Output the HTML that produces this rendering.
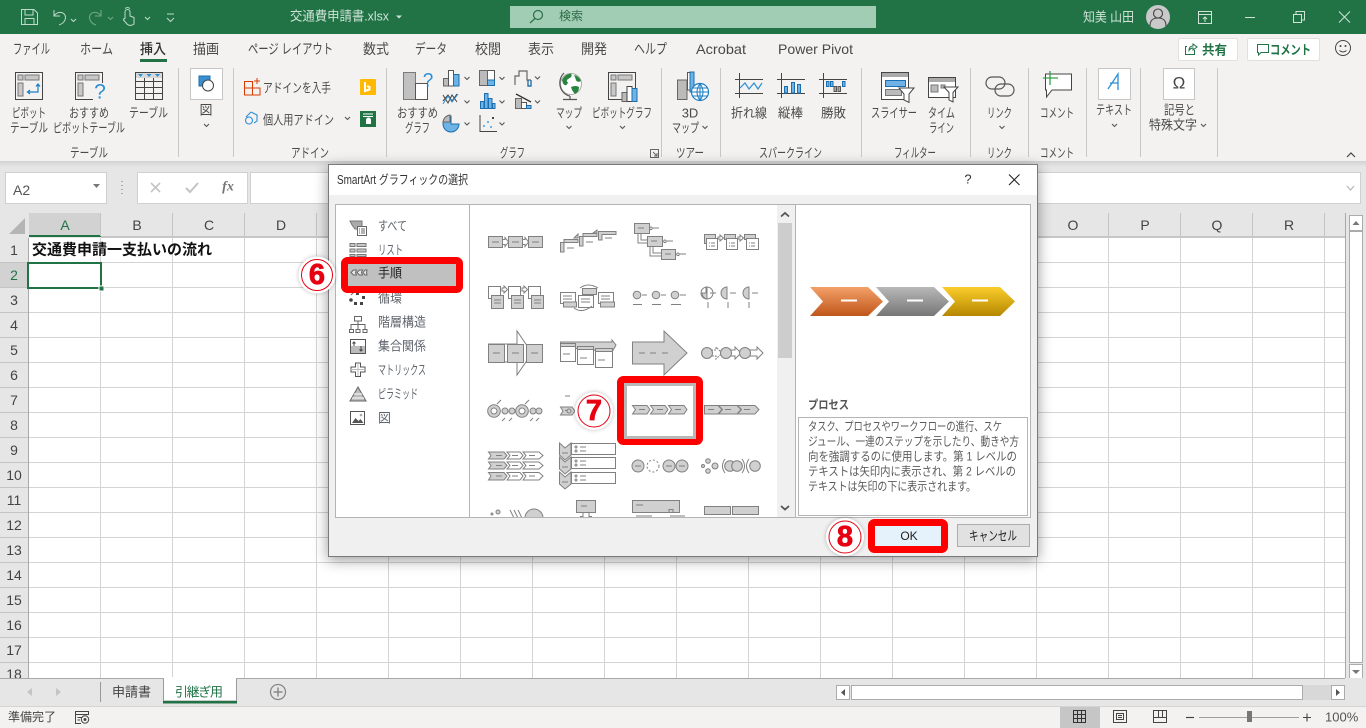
<!DOCTYPE html>
<html lang="ja"><head><meta charset="utf-8"><title>交通費申請書.xlsx</title>
<style>
html,body{margin:0;padding:0;width:1366px;height:728px;overflow:hidden;background:#fff}
svg{display:block;font-family:"Liberation Sans","Noto Sans CJK JP",sans-serif}
text{white-space:pre;dominant-baseline:central}
.r{font-size:13px;fill:#4a4a4a}
.m{text-anchor:middle}
.tab{font-size:14px;fill:#484848}
.h{font-size:14px;fill:#444;text-anchor:middle}
.tt{font-size:13px;fill:#cfe3d7}
.li{font-size:13px;fill:#5f656d}
.d{font-size:12px;fill:#5a5a5a}
.sep{stroke:#c8c8c8;stroke-width:1}
.ln{fill:none;stroke:#444;stroke-width:1}
.lg{fill:none;stroke:#666;stroke-width:1}
.ch{fill:none;stroke:#555;stroke-width:1.1}
.g path,.g rect,.g circle,.g polygon,.g line,.g polyline{stroke:#808080;stroke-width:1}
.g .f{fill:#d0d0d0}
.g .w{fill:#fff}
.g .n{fill:none}
.b{font-family:"Liberation Sans",sans-serif;font-weight:700;font-size:29px;fill:#e60012;stroke:#e60012;stroke-width:.8px;text-anchor:middle}
</style></head><body>
<svg width="1366" height="728" viewBox="0 0 1366 728" xmlns="http://www.w3.org/2000/svg">
<defs>
<pattern id="grid" x="28" y="238" width="72" height="25" patternUnits="userSpaceOnUse">
<rect width="72" height="25" fill="#fff"/>
<path d="M0.5 0V25M0 24.5H72" stroke="#d4d4d4" fill="none"/>
</pattern>
<linearGradient id="go" x1="0" y1="0" x2="0" y2="1"><stop offset="0" stop-color="#f3a068"/><stop offset="1" stop-color="#c0561a"/></linearGradient>
<linearGradient id="gg" x1="0" y1="0" x2="0" y2="1"><stop offset="0" stop-color="#b8b8b8"/><stop offset="1" stop-color="#767676"/></linearGradient>
<linearGradient id="gy" x1="0" y1="0" x2="0" y2="1"><stop offset="0" stop-color="#fbcd2c"/><stop offset="1" stop-color="#b58700"/></linearGradient>
<linearGradient id="sh" x1="0" y1="0" x2="0" y2="1"><stop offset="0" stop-color="#d2d2d2"/><stop offset="1" stop-color="#e6e6e6"/></linearGradient>
<clipPath id="galclip"><rect x="471" y="205" width="306" height="312"/></clipPath>
<clipPath id="r18"><rect x="0" y="238" width="28" height="440"/></clipPath>
</defs>

<!-- title bar -->
<rect width="1366" height="34" fill="#217346"/>
<g fill="none" stroke="#c2dacb" stroke-width="1">
<path d="M21.5 9.5H34L37.5 13V24.5H21.5ZM25 9.5V15H33V9.5M25 24.5V18.5H34V24.5"/>
<path d="M54 10V16H60M54 16C58 10 66 12 65.5 18C65 22 62 24 59 25"/>
<path d="M71 20l2.5 2.5L76 20" transform="translate(0,-1)"/>
<path d="M125 19V12a2.5 2.5 0 0 1 5 0V16l4 1.5V24q-4 3-7 0l-3.500-4q0-2 1.500-1" />
<path d="M125 8.500a4 4 0 0 1 5 0"/>
<path d="M145 19l2.500 2.500L150 19" transform="translate(0,-2)"/>
<path d="M167 14h7M167 18l3.500 3.500L174 18"/>
</g>
<g fill="none" stroke="#6fa787" stroke-width="1.100">
<path d="M101 10V16H95M101 16C97 10 89 12 89.500 18C90 22 93 24 96 25"/>
<path d="M108 17l2.500 2.500L113 17"/>
</g>
<text x="290" y="16" class="tt" textLength="99" lengthAdjust="spacingAndGlyphs">交通費申請書.xlsx</text>
<path d="M396 15.500h6l-3 3z" fill="#cfe3d7"/>
<rect x="510" y="6" width="366" height="22" fill="#a0cdb3"/>
<circle cx="538" cy="15" r="4.500" fill="none" stroke="#2b7048" stroke-width="1.200"/>
<path d="M535 18.500L530 23" stroke="#2b7048" stroke-width="1.200"/>
<text x="559" y="16" font-size="12" fill="#2f6b48">検索</text>
<text x="1083" y="17" class="tt" textLength="51" lengthAdjust="spacingAndGlyphs">知美 山田</text>
<circle cx="1158" cy="17" r="12" fill="#c9c9c9"/>
<g fill="none" stroke="#444" stroke-width="1.100"><circle cx="1158" cy="13.500" r="4.500"/><path d="M1150 26c0-6 3-8 8-8s8 2 8 8"/></g>
<g fill="none" stroke="#cfe3d7" stroke-width="1">
<path d="M1198.500 11.500H1211.500V23.500H1198.500ZM1198.500 14.500H1211.500M1205 22V17M1203 19l2-2 2 2"/>
<path d="M1245 17.500H1255"/>
<path d="M1293.500 14.500H1301.500V22.500H1293.500ZM1296 14.500V11.500H1304.500V20H1301.500"/>
<path d="M1339 11.500L1350 22.500M1350 11.500L1339 22.500"/>
</g>

<!-- ribbon -->
<rect y="34" width="1366" height="127" fill="#f3f2f1"/>
<text x="13" y="49" class="tab" textLength="37" lengthAdjust="spacingAndGlyphs">ファイル</text>
<text x="80" y="49" class="tab" textLength="33" lengthAdjust="spacingAndGlyphs">ホーム</text>
<text x="140" y="49" class="tab" style="font-weight:500;fill:#333" textLength="26" lengthAdjust="spacingAndGlyphs">挿入</text>
<rect x="140" y="59" width="27" height="3" fill="#217346"/>
<text x="193" y="49" class="tab" textLength="26" lengthAdjust="spacingAndGlyphs">描画</text>
<text x="248" y="49" class="tab" textLength="85" lengthAdjust="spacingAndGlyphs">ページ レイアウト</text>
<text x="363" y="49" class="tab" textLength="26" lengthAdjust="spacingAndGlyphs">数式</text>
<text x="415" y="49" class="tab" textLength="32" lengthAdjust="spacingAndGlyphs">データ</text>
<text x="475" y="49" class="tab" textLength="26" lengthAdjust="spacingAndGlyphs">校閲</text>
<text x="528" y="49" class="tab" textLength="26" lengthAdjust="spacingAndGlyphs">表示</text>
<text x="581" y="49" class="tab" textLength="26" lengthAdjust="spacingAndGlyphs">開発</text>
<text x="634" y="49" class="tab" textLength="33" lengthAdjust="spacingAndGlyphs">ヘルプ</text>
<text x="696" y="49" class="tab" textLength="50" lengthAdjust="spacingAndGlyphs">Acrobat</text>
<text x="778" y="49" class="tab" textLength="75" lengthAdjust="spacingAndGlyphs">Power Pivot</text>

<rect x="1178.500" y="38.500" width="59" height="22" rx="1.500" fill="#fff" stroke="#e0e0e0"/>
<path d="M1187 46.500H1185.500V54.500H1194.500V50M1189 50.500C1189 47 1191 46 1193 46V44L1197 47L1193 50V48C1191.500 48 1190 49 1189 50.500Z" fill="none" stroke="#217346"/>
<text x="1202" y="50" font-size="13" font-weight="700" fill="#217346" textLength="25" lengthAdjust="spacingAndGlyphs">共有</text>
<rect x="1247.500" y="38.500" width="72" height="22" rx="1.500" fill="#fff" stroke="#e0e0e0"/>
<path d="M1257.500 44.500H1268.500V52.500H1261L1258.500 55V52.500H1257.500Z" fill="none" stroke="#217346"/>
<text x="1270" y="50" font-size="13" font-weight="700" fill="#217346" textLength="41" lengthAdjust="spacingAndGlyphs">コメント</text>
<g fill="none" stroke="#444"><circle cx="1343" cy="48" r="7.500"/><path d="M1339.500 50.500q3.500 3 7 0"/></g>
<circle cx="1340.500" cy="46" r="1" fill="#444"/><circle cx="1345.500" cy="46" r="1" fill="#444"/>

<!-- separators -->
<g class="sep">
<path d="M178.500 68V157M233.500 68V157M386.500 68V157M661.500 68V157M720.500 68V157M861.500 68V157M970.500 68V157M1028.500 68V157M1086.500 68V157M1140.500 68V157M1217.500 68V157"/>
</g>

<!-- table group -->
<g class="ln">
<rect x="15.500" y="72.500" width="27" height="27"/>
<rect x="75.500" y="72.500" width="27" height="27"/>
<rect x="135.500" y="72.500" width="27" height="27"/>
<path d="M135.500 81.500H162.500M135.500 87.500H162.500M135.500 93.500H162.500M144.500 78V99.500M153.500 78V99.500"/>
</g>
<rect x="18" y="75" width="5" height="5" fill="#c8c8c8" stroke="#777"/><rect x="25" y="75" width="14" height="5" fill="#c8c8c8" stroke="#777"/><rect x="18" y="83" width="5" height="13" fill="#c8c8c8" stroke="#777"/>
<path d="M38 84V92H28M30 90l-2.500 2 2.500 2M36 86.500l2-2.500 2 2.500" fill="none" stroke="#1b7ec2" stroke-width="1.200"/>
<rect x="78" y="75" width="5" height="5" fill="#c8c8c8" stroke="#777"/><rect x="85" y="75" width="14" height="5" fill="#c8c8c8" stroke="#777"/><rect x="78" y="83" width="5" height="13" fill="#c8c8c8" stroke="#777"/>
<rect x="93" y="83" width="13" height="20" fill="#f3f2f1"/>
<text x="100" y="92" font-size="21" fill="#2e8fd3" text-anchor="middle">?</text>
<rect x="136" y="73" width="26" height="5" fill="#d8d8d8"/>
<path d="M138 74h5l-2.500 3zM146.500 74h5l-2.500 3zM155 74h5l-2.500 3z" fill="#2e8fd3"/>
<text x="12" y="113" class="r" textLength="34" lengthAdjust="spacingAndGlyphs">ピボット</text>
<text x="10" y="128" class="r" textLength="38" lengthAdjust="spacingAndGlyphs">テーブル</text>
<text x="69" y="113" class="r" textLength="40" lengthAdjust="spacingAndGlyphs">おすすめ</text>
<text x="53" y="128" class="r" textLength="72" lengthAdjust="spacingAndGlyphs">ピボットテーブル</text>
<text x="129" y="113" class="r" textLength="39" lengthAdjust="spacingAndGlyphs">テーブル</text>
<text x="70" y="153" class="r" textLength="38" lengthAdjust="spacingAndGlyphs">テーブル</text>

<!-- illustrations -->
<rect x="190.500" y="68.500" width="32" height="31" fill="#fff" stroke="#c6c6c6"/>
<path d="M199 76H210V86H199Z" fill="#3a8fd0" stroke="#1b6fae"/>
<circle cx="208" cy="85.500" r="5.500" fill="#fff" stroke="#444"/>
<text x="206" y="110" class="r m">図</text>
<path class="ch" d="M204 124l2.500 2.500L209 124"/>

<!-- add-ins -->
<path d="M244.500 81.500H252.500V95H244.500ZM244.500 88H260V95H252.500M252.500 88V81.500" fill="none" stroke="#d83b01"/>
<path d="M257 78v6M254 81h6" stroke="#d83b01"/>
<text x="263" y="88" class="r" textLength="68" lengthAdjust="spacingAndGlyphs">アドインを入手</text>
<rect x="360" y="79" width="16" height="16" rx="1" fill="#ffb900"/>
<path d="M365 82V91l4.500-1.500V87L367 86" fill="none" stroke="#fff" stroke-width="2"/>
<path d="M251 112l6 3v6l-3 2M249 124a3.500 3.500 0 1 1 0-7 3.500 3.500 0 1 1 0 7M251 112l-5 5" fill="none" stroke="#2e8fd3" stroke-width="1.100"/>
<text x="263" y="120" class="r" textLength="71" lengthAdjust="spacingAndGlyphs">個人用アドイン</text>
<path class="ch" d="M345 117l2.500 2.500L350 117"/>
<rect x="360" y="111" width="16" height="16" fill="#217346"/>
<path d="M363 114h10M363 116.500h10" stroke="#fff"/><path d="M366 120a2.500 2.500 0 0 1 5 0v4h-5z" fill="#fff"/>
<text x="291" y="153" class="r" textLength="38" lengthAdjust="spacingAndGlyphs">アドイン</text>

<!-- charts -->
<rect x="403.500" y="72.500" width="12" height="27" fill="#c1c1c1" stroke="#7a7a7a"/>
<rect x="415.500" y="83.500" width="12" height="16" fill="#fff" stroke="#555"/>
<text x="428" y="81" font-size="19" fill="#2e8fd3" text-anchor="middle">?</text>
<text x="397" y="113" class="r" textLength="41" lengthAdjust="spacingAndGlyphs">おすすめ</text>
<text x="405" y="128" class="r" textLength="25" lengthAdjust="spacingAndGlyphs">グラフ</text>
<!-- col 1 -->
<rect x="443.500" y="78.500" width="5" height="7.500" fill="#bbb" stroke="#666"/><rect x="448.500" y="70.500" width="5" height="15.500" fill="#fff" stroke="#555"/><rect x="453.500" y="74.500" width="5.500" height="11.500" fill="#6fb3e6" stroke="#1b6fae"/>
<path d="M443 101l5-6 4 6 5-7M443 95l5 8 4-8 5 7" fill="none" stroke="#444"/><path d="M443 104l5-8 4 6 6-8" fill="none" stroke="#2e8fd3"/>
<path d="M451 116a8 8 0 1 0 8 8h-8z" fill="#6fb3e6" stroke="#1b6fae"/><path d="M443 122a8 8 0 0 1 7-7v7z" fill="#bbb" stroke="#666"/>
<!-- col 2 -->
<rect x="479.500" y="70.500" width="15" height="15" fill="#fff" stroke="#555"/><rect x="479.500" y="70.500" width="8" height="15" fill="#bbb" stroke="#666"/><rect x="487.500" y="80" width="7" height="5.500" fill="#6fb3e6" stroke="#1b6fae"/>
<g fill="#6fb3e6" stroke="#1b6fae"><rect x="480.500" y="101.500" width="3.500" height="7"/><rect x="484.500" y="93.500" width="3.500" height="15"/><rect x="488.500" y="98.500" width="3.500" height="10"/><rect x="492.500" y="103.500" width="2.500" height="5"/></g>
<path d="M480 115V131.500H497" fill="none" stroke="#444"/>
<g fill="#6fb3e6"><rect x="483" y="125" width="2" height="2"/><rect x="487" y="121" width="2" height="2"/><rect x="490" y="126" width="2" height="2"/></g><rect x="492" y="117" width="2" height="2" fill="#444"/>
<!-- col 3 -->
<path d="M515 85V76H519V71H527V80H531M528 80V86H531V80" fill="none" stroke="#666" stroke-width="1.200"/><path d="M528 80V86H531V80" fill="none" stroke="#1b6fae" stroke-width="1.200"/>
<rect x="515.500" y="98.500" width="6" height="10" fill="#bbb" stroke="#666"/><rect x="521.500" y="102.500" width="5" height="6" fill="#fff" stroke="#555"/><rect x="526.500" y="105.500" width="4.500" height="3" fill="#6fb3e6" stroke="#1b6fae"/><path d="M516 94l15 8" stroke="#333" stroke-width="1.300"/>
<g class="ch"><path d="M464.500 77l2.500 2.500 2.500-2.500M464.500 100.500l2.500 2.500 2.500-2.500M464.500 122.500l2.500 2.500 2.500-2.500M499.500 77l2.500 2.500 2.500-2.500M499.500 100.500l2.500 2.500 2.500-2.500M499.500 122.500l2.500 2.500 2.500-2.500M535 76.500l2.500 2.500 2.500-2.500M535 100.500l2.500 2.500 2.500-2.500"/></g>
<!-- map -->
<circle cx="571" cy="84" r="10.500" fill="#fff" stroke="#aaa"/>
<path d="M562 80q3-6 9-6.500 2 3-2 5t-1 4q-2 5-5 1zM574 75q5 1 7 6-4 2-5-1t-2-5zM571 87q5-2 8 0 0 5-4 7-3-3-4-7z" fill="#29843f"/>
<path d="M564 73a14 14 0 0 0 0 20q4 3 6 3M570 96v3M563 99.500h14" fill="none" stroke="#555" stroke-width="1.200"/>
<text x="556" y="113" class="r" textLength="26" lengthAdjust="spacingAndGlyphs">マップ</text>
<path class="ch" d="M566.500 126l2.500 2.500 2.500-2.500"/>
<!-- pivot chart -->
<rect x="608.500" y="72.500" width="27" height="27" fill="none" stroke="#444"/>
<rect x="611" y="75" width="5" height="5" fill="#c8c8c8" stroke="#777"/><rect x="618" y="75" width="14" height="5" fill="#c8c8c8" stroke="#777"/><rect x="611" y="83" width="5" height="13" fill="#c8c8c8" stroke="#777"/>
<rect x="622" y="92.500" width="5" height="9" fill="#bbb" stroke="#666"/><rect x="627" y="86.500" width="5" height="15" fill="#fff" stroke="#444"/><rect x="632" y="88.500" width="5" height="13" fill="#6fb3e6" stroke="#1b6fae"/>
<text x="592" y="113" class="r" textLength="60" lengthAdjust="spacingAndGlyphs">ピボットグラフ</text>
<path class="ch" d="M620 126l2.500 2.500 2.500-2.500"/>
<text x="500" y="153" class="r" textLength="25" lengthAdjust="spacingAndGlyphs">グラフ</text>
<path d="M650.500 149.500H658.500V157.500H650.500ZM653 152l4 4M657 153v3h-3" fill="none" stroke="#666"/>

<!-- 3D map -->
<path d="M677.500 85V99.500H687V80H677.500Z" fill="#bbb" stroke="#666"/>
<path d="M687.500 72.500H694V90H687.500Z" fill="#fff" stroke="#555"/>
<path d="M694 72h-4v20h4z" fill="#6fb3e6" stroke="#1b6fae"/>
<circle cx="700" cy="92" r="8.500" fill="#fff" stroke="#1b7ec2" stroke-width="1.200"/>
<path d="M691.500 92H708.500M693 88H707M693 96H707M700 83.500V100.500M700 83.500Q694 92 700 100.500M700 83.500Q706 92 700 100.500" fill="none" stroke="#1b7ec2"/>
<text x="690" y="113" class="r m">3D</text>
<text x="672" y="128" class="r" textLength="27" lengthAdjust="spacingAndGlyphs">マップ</text>
<path class="ch" d="M702.500 126l2.500 2.500 2.500-2.500"/>
<text x="676" y="153" class="r" textLength="28" lengthAdjust="spacingAndGlyphs">ツアー</text>

<!-- sparklines -->
<g class="ln">
<path d="M735 79.500H763M735 93.500H763M739.500 73V98"/>
<path d="M777 79.500H805M777 93.500H805M781.500 73V98"/>
<path d="M819 79.500H847M819 93.500H847M823.500 73V98"/>
</g>
<path d="M740 88l5-5 4 6 5-6 4 6 4-6" fill="none" stroke="#2e8fd3" stroke-width="1.200"/>
<g fill="#6fb3e6" stroke="#1b6fae"><rect x="784.500" y="86.500" width="3" height="6.500"/><rect x="791.500" y="82.500" width="3" height="10.500"/><rect x="797.500" y="84.500" width="3" height="8.500"/></g>
<g fill="#6fb3e6" stroke="#1b6fae"><rect x="826.500" y="81.500" width="2.500" height="5"/><rect x="830.500" y="81.500" width="2.500" height="5"/><rect x="842.500" y="81.500" width="2.500" height="5"/></g>
<g fill="#aaa" stroke="#555"><rect x="834" y="86.500" width="2.500" height="5"/><rect x="838" y="86.500" width="2.500" height="5"/></g>
<text x="731" y="113" class="r" textLength="36" lengthAdjust="spacingAndGlyphs">折れ線</text>
<text x="778" y="113" class="r" textLength="25" lengthAdjust="spacingAndGlyphs">縦棒</text>
<text x="821" y="113" class="r" textLength="25" lengthAdjust="spacingAndGlyphs">勝敗</text>
<text x="759" y="153" class="r" textLength="63" lengthAdjust="spacingAndGlyphs">スパークライン</text>

<!-- filter -->
<rect x="881.500" y="72.500" width="27" height="27" fill="#fff" stroke="#444"/><rect x="882" y="73" width="26" height="4" fill="#aaa"/>
<rect x="885.500" y="80.500" width="20" height="6" fill="#6fb3e6" stroke="#1b6fae"/><rect x="885.500" y="89.500" width="16" height="6" fill="#bbb" stroke="#777"/>
<path d="M899 88H914L909 94V102.500L904 100V94Z" fill="#fff" stroke="#444"/>
<rect x="928.500" y="77.500" width="27" height="20" fill="#fff" stroke="#444"/><rect x="929" y="78" width="26" height="4" fill="#aaa"/>
<rect x="931" y="85" width="7" height="7" fill="#bbb" stroke="#777"/><rect x="941" y="85" width="4" height="3" fill="#bbb" stroke="#777"/>
<path d="M944 87H958L953 92.500V102L949 100V92.500Z" fill="#fff" stroke="#444"/>
<text x="871" y="113" class="r" textLength="46" lengthAdjust="spacingAndGlyphs">スライサー</text>
<text x="928" y="113" class="r" textLength="27" lengthAdjust="spacingAndGlyphs">タイム</text>
<text x="929" y="128" class="r" textLength="25" lengthAdjust="spacingAndGlyphs">ライン</text>
<text x="894" y="153" class="r" textLength="42" lengthAdjust="spacingAndGlyphs">フィルター</text>

<!-- link -->
<g fill="none" stroke="#555" stroke-width="1.200">
<rect x="986" y="77" width="19" height="12" rx="6"/><rect x="995" y="84" width="19" height="12" rx="6"/>
</g>
<text x="987" y="113" class="r" textLength="25" lengthAdjust="spacingAndGlyphs">リンク</text>
<path class="ch" d="M999.500 126l2.500 2.500 2.500-2.500"/>
<text x="987" y="153" class="r" textLength="25" lengthAdjust="spacingAndGlyphs">リンク</text>

<!-- comment -->
<path d="M1045.500 74H1071.500V90H1052L1046.500 97V90H1045.500Z" fill="#fff" stroke="#444"/>
<path d="M1050 71V85M1043 78H1058" stroke="#33a04a" stroke-width="1.300"/>
<text x="1040" y="113" class="r" textLength="34" lengthAdjust="spacingAndGlyphs">コメント</text>
<text x="1040" y="153" class="r" textLength="34" lengthAdjust="spacingAndGlyphs">コメント</text>

<!-- text -->
<rect x="1098.500" y="68.500" width="32" height="31" fill="#fff" stroke="#c6c6c6"/>
<path d="M1108 89l10-15v16M1110 83h8" fill="none" stroke="#2e8fd3" stroke-width="1.300"/>
<text x="1096" y="110" class="r" textLength="36" lengthAdjust="spacingAndGlyphs">テキスト</text>
<path class="ch" d="M1112 124l2.500 2.500 2.500-2.500"/>
<rect x="1163.500" y="68.500" width="31" height="31" fill="#fff" stroke="#c6c6c6"/>
<text x="1179" y="83" font-size="17" fill="#444" text-anchor="middle">Ω</text>
<text x="1164" y="110" class="r" textLength="31" lengthAdjust="spacingAndGlyphs">記号と</text>
<text x="1149" y="125" class="r" textLength="48" lengthAdjust="spacingAndGlyphs">特殊文字</text>
<path class="ch" d="M1201 124l2.500 2.500 2.500-2.500"/>
<path d="M1347 157l4-4 4 4" fill="none" stroke="#444" stroke-width="1.200"/>

<!-- formula bar -->
<rect y="161" width="1366" height="517" fill="#e6e6e6"/>
<rect y="161" width="1366" height="6" fill="url(#sh)"/>
<rect x="5.500" y="172.500" width="101" height="31" fill="#fff" stroke="#d0d0d0"/>
<text x="13" y="190" font-size="14" fill="#555">A2</text>
<path d="M93 184h7l-3.500 4z" fill="#777"/>
<path d="M122 181v1M122 185v1M122 189v1M122 193v1" stroke="#999" stroke-width="1.500"/>
<rect x="137.500" y="172.500" width="110" height="31" fill="#fff" stroke="#d0d0d0"/>
<path d="M151 183l9 9M160 183l-9 9" stroke="#c4c4c4" stroke-width="1.600"/>
<path d="M186 188l4 4 8-9" fill="none" stroke="#c4c4c4" stroke-width="2"/>
<text x="228" y="187" font-family="Liberation Serif" font-style="italic" font-weight="700" font-size="14" fill="#777" text-anchor="middle">fx</text>
<rect x="250.500" y="172.500" width="1110" height="31" fill="#fff" stroke="#d0d0d0"/>
<path d="M1347 186l3.500 4 3.500-4" fill="none" stroke="#bbb" stroke-width="1.300"/>

<!-- column header -->
<path d="M25 218V234H9Z" fill="#b5b5b5"/>
<rect x="29" y="213" width="72" height="22" fill="#d2d2d2"/>
<rect x="29" y="235" width="72" height="2" fill="#217346"/>
<path d="M100.500 213V236M172.500 213V236M244.500 213V236M316.500 213V236M1036.500 213V236M1108.500 213V236M1180.500 213V236M1252.500 213V236M1324.500 213V236" stroke="#c4c4c4"/>
<rect x="101" y="236.500" width="1244" height="1" fill="#a8a8a8"/>
<text x="65" y="225" class="h" style="fill:#217346">A</text>
<text x="137" y="225" class="h">B</text><text x="209" y="225" class="h">C</text><text x="281" y="225" class="h">D</text>
<text x="1073" y="225" class="h">O</text><text x="1145" y="225" class="h">P</text><text x="1217" y="225" class="h">Q</text><text x="1289" y="225" class="h">R</text>

<!-- grid -->
<rect x="29" y="238" width="1316" height="440" fill="url(#grid)"/>
<rect x="1345" y="213" width="1" height="465" fill="#a8a8a8"/>
<rect x="28" y="238" width="1" height="440" fill="#a8a8a8"/>
<!-- row header -->
<rect x="0" y="263" width="28" height="25" fill="#d2d2d2"/>
<g clip-path="url(#r18)">
<path d="M0 262.500H28M0 287.500H28M0 312.500H28M0 337.500H28M0 362.500H28M0 387.500H28M0 412.500H28M0 437.500H28M0 462.500H28M0 487.500H28M0 512.500H28M0 537.500H28M0 562.500H28M0 587.500H28M0 612.500H28M0 637.500H28M0 662.500H28" stroke="#c4c4c4"/>
<g font-size="14" fill="#444" text-anchor="middle">
<text x="14" y="250">1</text><text x="14" y="275" fill="#217346">2</text><text x="14" y="300">3</text><text x="14" y="325">4</text><text x="14" y="350">5</text><text x="14" y="375">6</text><text x="14" y="400">7</text><text x="14" y="425">8</text><text x="14" y="450">9</text><text x="14" y="475">10</text><text x="14" y="500">11</text><text x="14" y="525">12</text><text x="14" y="550">13</text><text x="14" y="575">14</text><text x="14" y="600">15</text><text x="14" y="625">16</text><text x="14" y="650">17</text><text x="14" y="674">18</text>
</g></g>
<text x="32" y="250" font-size="15" font-weight="700" fill="#111" textLength="180" lengthAdjust="spacingAndGlyphs">交通費申請一支払いの流れ</text>
<rect x="28" y="263" width="73" height="25" fill="none" stroke="#217346" stroke-width="2"/>
<rect x="99" y="286" width="5" height="5" fill="#217346" stroke="#fff"/>

<!-- vertical scrollbar -->
<rect x="1346" y="213" width="20" height="465" fill="#e6e6e6"/>
<rect x="1349.500" y="215.500" width="13" height="15" fill="#fff" stroke="#ababab"/><path d="M1352.500 225l3.500-4 3.500 4z" fill="#777"/>
<rect x="1349.500" y="231.500" width="13" height="431" fill="#fff" stroke="#ababab"/>
<rect x="1349.500" y="664.500" width="13" height="14" fill="#fff" stroke="#ababab"/><path d="M1352 670h8l-4 4z" fill="#777"/>

<!-- sheet tabs -->
<rect y="678" width="1366" height="28" fill="#e6e6e6"/>
<rect x="0" y="678" width="1345" height="1" fill="#a8a8a8"/>
<path d="M32 688v8l-5-4zM56 688v8l5-4z" fill="#c4c4c4"/>
<rect x="100" y="682" width="1" height="20" fill="#999"/>
<text x="112" y="692" font-size="13" fill="#444" textLength="39">申請書</text>
<path d="M163.500 679V701H236.500V679" fill="#fff" stroke="#999"/><rect x="164" y="677" width="72" height="3" fill="#fff"/>
<rect x="163" y="701" width="74" height="2.500" fill="#217346"/>
<text x="175" y="692" font-size="13" fill="#217346" textLength="48">引継ぎ用</text>
<circle cx="278" cy="692" r="7.500" fill="none" stroke="#888" stroke-width="1.300"/><path d="M278 687.500v9M273.500 692h9" stroke="#888" stroke-width="1.500"/>
<!-- hscroll -->
<rect x="836.500" y="685.500" width="13" height="14" fill="#fff" stroke="#ababab"/><path d="M845 689v7l-4-3.500z" fill="#555"/>
<rect x="851.500" y="685.500" width="451" height="14" fill="#fff" stroke="#ababab"/>
<rect x="1303" y="685" width="28" height="15" fill="#d8d8d8"/>
<rect x="1331.500" y="685.500" width="13" height="14" fill="#fff" stroke="#ababab"/><path d="M1336 689v7l4-3.500z" fill="#555"/>

<!-- status bar -->
<rect y="706" width="1366" height="22" fill="#f3f2f1"/>
<rect y="706" width="1366" height="1" fill="#d4d4d4"/>
<text x="8" y="717" font-size="12" fill="#444" textLength="48">準備完了</text>
<path d="M75.500 711.500H88.500V714.500H75.500ZM75.500 714.500V723.500H81M77.500 717.500H82M77.500 720H80" fill="none" stroke="#444"/><circle cx="85" cy="719.500" r="3.700" fill="none" stroke="#444"/><circle cx="85" cy="719.500" r="1.500" fill="#444"/>
<rect x="1060" y="707" width="40" height="21" fill="#c6c6c6"/>
<path d="M1073.500 710.500H1085.500V722.500H1073.500ZM1077.500 710.500V722.500M1081.500 710.500V722.500M1073.500 714.500H1085.500M1073.500 718.500H1085.500" fill="none" stroke="#333"/>
<path d="M1113.500 710.500H1126.500V722.500H1113.500ZM1116.500 713.500H1123.500V719.500H1116.500ZM1118 715.500H1122M1118 717.500H1122" fill="none" stroke="#444"/>
<path d="M1153.500 710.500H1166.500V722.500H1153.500ZM1153.500 717.500H1166.500M1158.500 710.500V717.500M1162.500 710.500V717.500" fill="none" stroke="#444"/>
<path d="M1186 717.500H1194" stroke="#444" stroke-width="1.200"/>
<rect x="1199" y="717" width="100" height="1" fill="#a0a0a0"/>
<rect x="1247" y="711" width="5" height="11" fill="#777"/>
<path d="M1303 717.500H1311M1307 713.500V721.500" stroke="#444" stroke-width="1.100"/>
<text x="1325" y="717" font-size="13" fill="#555">100%</text>

<!-- dialog -->
<rect x="328.500" y="164.500" width="709" height="392" fill="#f0f0f0" stroke="#7a7a7a" style="filter:drop-shadow(0 3px 7px rgba(0,0,0,.4))"/>
<rect x="329" y="165" width="708" height="30" fill="#fff"/>
<text x="337" y="180" font-size="12.500" fill="#333" textLength="131" lengthAdjust="spacingAndGlyphs">SmartArt グラフィックの選択</text>
<text x="968" y="179" font-size="13" fill="#333" text-anchor="middle">?</text>
<path d="M1009 174.500L1019.500 185M1019.500 174.500L1009 185" stroke="#222" stroke-width="1.100"/>

<rect x="335.500" y="204.500" width="695" height="313" fill="#fff" stroke="#b4b4b4"/>
<path d="M469.500 204.500V517.500M795.500 204.500V517.500" stroke="#b4b4b4"/>

<!-- list -->
<g fill="none" stroke="#666">
<path d="M350 221H362V229H355L352 225Z M350 229" fill="#aaa" stroke="#777"/>
<rect x="357.500" y="226.500" width="9" height="9" fill="#fff"/>
<path d="M359 229h1M361 229h4M359 231h1M361 231h4M359 233h1M361 233h4"/>
</g>
<path d="M350 243.500h5v3h-5zM357 243.500h9v3h-9zM350 249h5v3h-5zM357 249h9v3h-9zM350 254.500h5v2h-5zM357 254.500h9v2h-9z" fill="#c8c8c8" stroke="#777"/>
<g fill="none" stroke="#666"><path d="M351 291l2 2-2 2M356 291l2 2-2 2"/></g>
<g fill="#444"><circle cx="351" cy="300" r="1.800"/><rect x="356" y="292" width="3" height="3"/><rect x="362" y="296" width="3" height="3"/><rect x="354" y="302" width="3" height="3"/><rect x="360" y="302" width="3" height="3"/></g>
<path d="M354.500 316.500H361.500V321H354.500ZM358 321V324M351 329V324.500H365V329M358 324.500V329M349.500 329.500H353.500V332.500H349.500ZM356 329.500H360V332.500H356ZM363 329.500H367V332.500H363Z" fill="none" stroke="#666"/>
<rect x="350.500" y="339.500" width="15" height="14" fill="#fff" stroke="#555"/><rect x="351" y="346" width="14" height="7" fill="#bbb"/><path d="M354 346V342M352.500 343.500L354 342l1.500 1.500M361 346V351M359.500 349.500L361 351l1.500-1.500" fill="none" stroke="#444"/>
<path d="M355.500 363H360.500V367H365V372H360.500V376.500H355.500V372H351V367H355.500Z" fill="#fff" stroke="#555"/><path d="M358 363V376M351 369.500H365" stroke="#bbb"/>
<path d="M358 387L366 401H350Z" fill="#bbb" stroke="#666"/><path d="M354 394H362M352 398H364" stroke="#fff"/>
<rect x="350.500" y="411.500" width="14" height="13" fill="#fff" stroke="#555"/><path d="M352 423l3.500-5 3 3 2-2 3 4z" fill="#555"/><circle cx="361" cy="415" r="1.300" fill="#aaa"/>
<text x="378" y="226" class="li" textLength="29" lengthAdjust="spacingAndGlyphs">すべて</text>
<text x="378" y="250" class="li" textLength="25" lengthAdjust="spacingAndGlyphs">リスト</text>
<text x="378" y="298" class="li" textLength="24" lengthAdjust="spacingAndGlyphs">循環</text>
<text x="378" y="322" class="li" textLength="48" lengthAdjust="spacingAndGlyphs">階層構造</text>
<text x="378" y="346" class="li" textLength="48" lengthAdjust="spacingAndGlyphs">集合関係</text>
<text x="378" y="370" class="li" textLength="48" lengthAdjust="spacingAndGlyphs">マトリックス</text>
<text x="378" y="394" class="li" textLength="40" lengthAdjust="spacingAndGlyphs">ピラミッド</text>
<text x="378" y="418" class="li">図</text>

<!-- selected list item -->
<rect x="344.500" y="260.500" width="115" height="29" rx="3" fill="#c0c0c0" stroke="#f00" stroke-width="7"/>
<path d="M351 272.500l2.500-2.500h3l-1 2.500 1 2.500h-3zM357 272.500l2.500-2.500h3l-1 2.500 1 2.500h-3zM363 272.500l2-2.500h2l-.5 2.500.5 2.500h-2z" fill="#e8e8e8" stroke="#666"/>
<text x="378" y="273" font-size="13" fill="#222" textLength="24" lengthAdjust="spacingAndGlyphs">手順</text>

<!-- gallery -->
<g class="g" clip-path="url(#galclip)">
<!-- r1 -->
<rect class="f" x="488.500" y="236.500" width="14" height="11"/><rect class="f" x="508.500" y="236.500" width="14" height="11"/><rect class="f" x="528.500" y="236.500" width="14" height="11"/>
<polygon class="w" points="502.500,239.500 505,239.500 505,237.500 508.500,242 505,246.500 505,244.500 502.500,244.500"/><polygon class="w" points="522.500,239.500 525,239.500 525,237.500 528.500,242 525,246.500 525,244.500 522.500,244.500"/>
<path class="n" d="M492 242h7M512 242h7M532 242h7"/>
<path class="f" d="M560.500 252V242.500H578V239.500H564V252Z"/><path class="n" d="M567 248h7"/>
<path class="f" d="M579.500 246V236.500H597V233.500H583V246Z"/><path class="n" d="M586 242h7"/>
<path class="f" d="M598.500 240V231.500H616V234.500H602V240Z"/><path class="n" d="M605 238h7"/>
<polygon class="f" points="574,238 578,234 578,238"/><polygon class="f" points="593,233 597,230 597,233"/>
<rect class="f" x="634.500" y="223.500" width="15" height="10"/><path class="n" d="M638 228h6M653 228h6"/><circle class="w" cx="651" cy="228.300" r="1.300"/>
<path class="n" d="M638 233.500V243H647M641 233.500V240H647"/>
<rect class="f" x="647.500" y="236.500" width="15" height="10"/><path class="n" d="M651 241h6M667 241h6"/><circle class="w" cx="665" cy="241.300" r="1.300"/>
<path class="n" d="M650 246.500V256H661M653 246.500V253H661"/>
<rect class="f" x="661.500" y="249.500" width="14" height="10"/><path class="n" d="M665 254h6M680 254h6"/><circle class="w" cx="678" cy="254.300" r="1.300"/>
<g><rect class="f" x="704.500" y="234.500" width="11" height="9"/><rect class="w" x="706.500" y="238.500" width="11" height="11"/><rect class="f" x="724.500" y="234.500" width="11" height="5"/><rect class="w" x="726.500" y="238.500" width="11" height="11"/><rect class="f" x="744.500" y="234.500" width="11" height="5"/><rect class="w" x="746.500" y="238.500" width="12" height="11"/></g>
<polygon class="w" points="718,237 720,237 720,235 723.500,238 720,241 720,239 718,239"/><polygon class="w" points="738,237 740,237 740,235 743.500,238 740,241 740,239 738,239"/>
<path class="n" d="M709 243h1M711 243h4M709 246h1M711 246h4M729 243h1M731 243h4M729 246h1M731 246h4M749 243h1M751 243h4M749 246h1M751 246h4"/>
<!-- r2 -->
<g>
<rect class="w" x="488.500" y="286.500" width="12" height="12"/><rect class="w" x="508.500" y="286.500" width="12" height="12"/><rect class="w" x="528.500" y="286.500" width="12" height="12"/>
<rect class="f" x="491.500" y="295.500" width="12" height="13"/><rect class="f" x="511.500" y="295.500" width="12" height="13"/><rect class="f" x="531.500" y="295.500" width="12" height="13"/>
<path class="n" d="M494 300h7M494 303h7M514 300h7M514 303h7M534 300h7M534 303h7"/>
<polygon class="w" points="502,288 504,288 504,286 507.500,289.500 504,293 504,291 502,291"/><polygon class="w" points="522,288 524,288 524,286 527.500,289.500 524,293 524,291 522,291"/>
</g>
<rect class="w" x="560.500" y="292.500" width="15" height="11"/><rect class="w" x="578.500" y="295.500" width="15" height="12"/><rect class="w" x="598.500" y="292.500" width="15" height="11"/>
<rect class="f" x="563.500" y="302" width="13" height="5"/><rect class="f" x="582.500" y="288.500" width="14" height="6"/><rect class="f" x="600.500" y="302" width="14" height="5"/>
<path class="n" d="M580 288q8-6 18 0M574 308q8 6 18-2M563 296h9M563 299h9M581 299h9M581 302h9M601 296h9M601 299h9"/>
<circle class="f" cx="637" cy="295" r="3.800"/><circle class="f" cx="656" cy="295" r="3.800"/><circle class="f" cx="675" cy="295" r="3.800"/>
<path class="n" d="M642 295h5M661 295h5M680 295h6M633 304.500h9M652 304.500h9M671 304.500h10"/>
<path class="w" d="M707 287a6 6 0 0 0 0 12z"/><path class="f" d="M707 287h-1v6h-4a6 6 0 0 0 5 6z"/><path class="n" d="M707 287a6 6 0 0 1 0 12zM710 293h6M708 302v6"/>
<path class="f" d="M727 287a6 6 0 0 0 0 12z"/><path class="n" d="M730 293h6M728 302v6"/>
<path class="f" d="M749 287a6 6 0 0 0 0 12z"/><path class="n" d="M752 293h6M749 302v6"/>
<!-- r3 -->
<polygon class="w" points="488.500,344 517,344 517,331 532,353 517,375 517,362 488.500,362"/>
<rect class="f" x="488.500" y="344.500" width="16" height="18"/><rect class="f" x="507.500" y="344.500" width="16" height="18"/><rect class="f" x="526.500" y="344.500" width="16" height="18"/>
<path class="n" d="M493 353h7M512 353h7M531 353h7"/>
<polygon class="f" points="560.500,342 612,342 612,340 616,345 612,352 560.500,347"/>
<rect class="w" x="560.500" y="343.500" width="15" height="18"/><rect class="f" x="560.500" y="343.500" width="15" height="3"/>
<rect class="w" x="577.500" y="346.500" width="16" height="18"/><rect class="f" x="577.500" y="346.500" width="16" height="3"/>
<rect class="w" x="595.500" y="348.500" width="17" height="19"/><rect class="f" x="595.500" y="348.500" width="17" height="3"/>
<path class="n" d="M563 354h7M580 358h7M598 360h7"/>
<polygon class="f" points="632.500,342 664,342 664,331 687,353 664,375 664,364 632.500,364"/>
<path class="n" d="M639 353h6M650 353h6M662 353h6" />
<polygon class="w" points="711,350 716,350 716,347 722,353 716,359 716,356 711,356" stroke-dasharray="2 1"/><polygon class="w" points="730,350 735,350 735,347 741,353 735,359 735,356 730,356"/><polygon class="w" points="749,350 757,350 757,347 763,353 757,359 757,356 749,356"/>
<circle class="f" cx="707" cy="353" r="5.500"/><circle class="f" cx="726" cy="353" r="5.500"/><circle class="f" cx="745" cy="353" r="5.500"/>
<!-- r4 -->
<circle class="f" cx="494" cy="411" r="6.300"/><circle class="w" cx="494" cy="411" r="3"/><circle class="f" cx="505" cy="411" r="3"/><circle class="f" cx="512" cy="411" r="3"/><circle class="f" cx="522" cy="411" r="6.300"/><circle class="w" cx="522" cy="411" r="3"/><circle class="f" cx="533" cy="411" r="3"/><circle class="f" cx="539" cy="411" r="3"/>
<path class="n" d="M497 404l4-4M505 418l-3 3M512 418l-3 3M525 404l4-4M533 418l-3 3M539 418l-3 3"/>
<polygon class="f" points="560.500,407 572,407 575,411 572,415 560.500,415 563,411"/><path class="n" d="M565 410.500h5M565 396h5"/>
<circle class="f" cx="569" cy="411" r="2"/>
<polygon class="f" points="704.500,405.500 718,405.500 722,409.500 718,414 704.500,414"/><polygon class="f" points="718.500,405.500 737,405.500 741,409.500 737,414 718.500,414 722.500,409.500"/><polygon class="f" points="737.500,405.500 755,405.500 759,409.500 755,414 737.500,414 741.500,409.500"/>
<path class="n" d="M708 409.500h6M725 409.500h6M744 409.500h6"/>
<!-- r5 -->
<g>
<polygon class="f" points="488.500,452 504,452 507,455.500 504,459 488.500,459 491,455.500"/><polygon class="w" points="507,452 520,452 523,455.500 520,459 507,459 510,455.500"/><polygon class="w" points="523,452 539,452 543,455.500 539,459 523,459 526,455.500"/>
<polygon class="f" points="488.500,462 504,462 507,465.500 504,469 488.500,469 491,465.500"/><polygon class="w" points="507,462 520,462 523,465.500 520,469 507,469 510,465.500"/><polygon class="w" points="523,462 539,462 543,465.500 539,469 523,469 526,465.500"/>
<polygon class="f" points="488.500,472.500 504,472.500 507,476 504,480 488.500,480 491,476"/><polygon class="w" points="507,472.500 520,472.500 523,476 520,480 507,480 510,476"/><polygon class="w" points="523,472.500 539,472.500 543,476 539,480 523,480 526,476"/>
<path class="n" d="M496 455.500h6M512 455.500h6M529 455.500h6M496 465.500h6M512 465.500h6M529 465.500h6M496 476h6M512 476h6M529 476h6"/>
</g>
<polygon class="f" points="559.500,443 565,448 571,443 571,455 565,460 559.500,455"/><polygon class="f" points="559.500,457 565,462 571,457 571,469 565,474 559.500,469"/><polygon class="f" points="559.500,472 565,477 571,472 571,484 565,489 559.500,484"/>
<rect class="w" x="571.500" y="443.500" width="44" height="11"/><rect class="w" x="571.500" y="457.500" width="44" height="11"/><rect class="w" x="571.500" y="472.500" width="44" height="11"/>
<path class="n" d="M580 447h6M580 451h6M580 461h6M580 465h6M580 476h6M580 480h6M562 453h6M562 467h6M562 482h6"/><circle class="w" cx="576" cy="447" r="1"/><circle class="w" cx="576" cy="451" r="1"/><circle class="w" cx="576" cy="461" r="1"/><circle class="w" cx="576" cy="465" r="1"/><circle class="w" cx="576" cy="476" r="1"/><circle class="w" cx="576" cy="480" r="1"/>
<circle class="f" cx="638" cy="466" r="6"/><circle class="w" cx="653" cy="466" r="6" stroke-dasharray="2 2"/><circle class="f" cx="669" cy="466" r="6"/><circle class="f" cx="682" cy="466" r="6"/>
<path class="n" d="M635 466h6M666 466h6M679 466h6"/>
<circle class="f" cx="708" cy="461" r="2.300"/><circle class="f" cx="715" cy="466" r="3"/><circle class="f" cx="708" cy="471" r="2.300"/><circle class="f" cx="703" cy="466" r="1.500"/>
<circle class="f" cx="730" cy="466" r="5.300"/><circle class="f" cx="737" cy="466" r="5.300"/><circle class="f" cx="755" cy="466" r="5.300"/>
<path class="n" d="M725 459q-5 7 0 14M742 459q5 7 0 14M749 459q-5 7 0 14"/>
<!-- r6 -->
<circle class="f" cx="534" cy="518" r="9"/><circle class="f" cx="498" cy="512" r="2"/><circle class="f" cx="492" cy="514" r="1"/>
<path class="n" d="M510 510l4 8M514 510l4 8M518 510l4 8"/>
<rect class="f" x="576.500" y="500.500" width="19" height="12"/><path class="n" d="M581 506h6M583 512.500v4h-3M589 512.500v4h3"/>
<rect class="f" x="632.500" y="500.500" width="47" height="12"/><path class="n" d="M636 505h7M669 512.500v-3h4v3M636 516h16M670 516h15"/>
<rect class="f" x="704.500" y="506.500" width="26" height="8"/><rect class="f" x="732.500" y="506.500" width="26" height="8"/>
</g>

<!-- gallery scrollbar -->
<rect x="777" y="205" width="18" height="312" fill="#f0f0f0"/>
<rect x="778" y="223" width="14" height="135" fill="#cdcdcd"/>
<path d="M781 216.500l4-3.500 4 3.500" fill="none" stroke="#555" stroke-width="1.800"/>
<path d="M781 506l4 3.500 4-3.500" fill="none" stroke="#555" stroke-width="1.800"/>

<!-- selected thumb -->
<rect x="620.500" y="379.500" width="79" height="62" rx="3" fill="#fff" stroke="#f00" stroke-width="7"/>
<rect x="625.500" y="384.500" width="69" height="53" fill="#fff" stroke="#b8b8b8" stroke-width="3"/>
<g class="g">
<polygon class="f" points="632.500,405.500 647,405.500 650,409.500 647,414 632.500,414 635.500,409.500"/><polygon class="f" points="650.500,405.500 665,405.500 668,409.500 665,414 650.500,414 653.500,409.500"/><polygon class="f" points="668.500,405.500 684,405.500 687,409.500 684,414 668.500,414 671.500,409.500"/>
<path class="n" d="M639 409.500h6M657 409.500h6M675 409.500h6"/>
</g>

<!-- preview -->
<polygon points="810,287 868,287 883,301.500 868,316 810,316 823,301.500" fill="url(#go)"/>
<polygon points="876,287 934,287 949,301.500 934,316 876,316 889,301.500" fill="url(#gg)"/>
<polygon points="942,287 1000,287 1015,301.500 1000,316 942,316 955,301.500" fill="url(#gy)"/>
<path d="M841 300.500H857M907 300.500H923M972 300.500H988" stroke="#fff" stroke-width="2"/>
<text x="808" y="405" font-size="12" font-weight="700" fill="#555" textLength="41" lengthAdjust="spacingAndGlyphs">プロセス</text>
<rect x="798.500" y="417.500" width="229" height="98" fill="#fff" stroke="#b4b4b4"/>
<text x="808" y="426.500" class="d" textLength="194" lengthAdjust="spacingAndGlyphs">タスク、プロセスやワークフローの進行、スケ</text>
<text x="808" y="441.500" class="d" textLength="211" lengthAdjust="spacingAndGlyphs">ジュール、一連のステップを示したり、動きや方</text>
<text x="808" y="456.500" class="d" textLength="209" lengthAdjust="spacingAndGlyphs">向を強調するのに使用します。第 1 レベルの</text>
<text x="808" y="471.500" class="d" textLength="208" lengthAdjust="spacingAndGlyphs">テキストは矢印内に表示され、第 2 レベルの</text>
<text x="808" y="486.500" class="d" textLength="168" lengthAdjust="spacingAndGlyphs">テキストは矢印の下に表示されます。</text>

<!-- buttons -->
<rect x="871.500" y="522.500" width="73" height="27" rx="3" fill="#e5f1fb" stroke="#f00" stroke-width="7"/>
<text x="909" y="536" font-size="12" fill="#222" text-anchor="middle">OK</text>
<rect x="957.500" y="524.500" width="72" height="22" fill="#e1e1e1" stroke="#adadad"/>
<text x="969" y="536" font-size="13" fill="#222" textLength="48" lengthAdjust="spacingAndGlyphs">キャンセル</text>

<!-- badges -->
<g style="filter:drop-shadow(0 0 2px rgba(0,0,0,.25))">
<circle cx="317" cy="275" r="18.500" fill="#fff"/>
<circle cx="594" cy="411" r="19" fill="#fff"/>
<circle cx="845" cy="537" r="19" fill="#fff"/>
</g>
<g fill="none" stroke="#e60012" stroke-width="1">
<circle cx="317" cy="275" r="15.500"/><circle cx="594" cy="411" r="16"/><circle cx="845" cy="537" r="16"/>
</g>
<text x="317" y="275" class="b">6</text>
<text x="594" y="411" class="b">7</text>
<text x="845" y="537" class="b">8</text>
</svg>
</body></html>
